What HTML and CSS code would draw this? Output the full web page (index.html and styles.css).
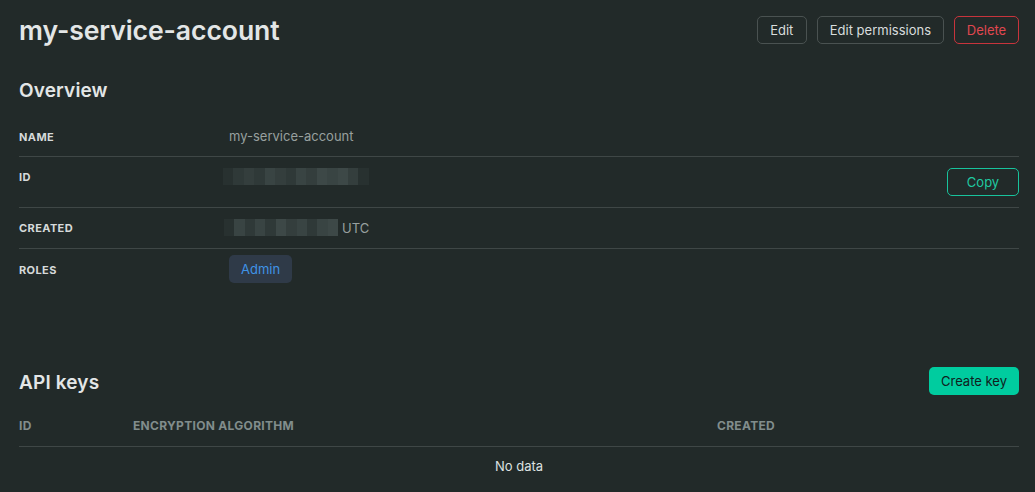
FILE: index.html
```html
<!DOCTYPE html>
<html>
<head>
<meta charset="utf-8">
<link rel="stylesheet" href="styles.css">
</head>
<body>
<div class="page">
  <header class="top">
    <h1 class="title">my-service-account</h1>
    <div class="actions">
      <button class="btn btn-outline btn-edit">Edit</button>
      <button class="btn btn-outline">Edit permissions</button>
      <button class="btn btn-danger">Delete</button>
    </div>
  </header>

  <section class="overview">
    <h2 class="section-title">Overview</h2>
    <div class="rows">
      <div class="row row-name">
        <div class="label">NAME</div>
        <div class="value">my-service-account</div>
      </div>
      <div class="row row-id">
        <div class="label">ID</div>
        <div class="value">
          <span class="mosaic mosaic-id">
            <i class="m1"></i><i class="m2"></i><i class="m3"></i><i class="m2"></i><i class="m4"></i><i class="m3"></i><i class="m2"></i><i class="m4"></i><i class="m3"></i><i class="m5"></i><i class="m4"></i><i class="m5"></i><i class="m3"></i><i class="m1"></i>
          </span>
        </div>
        <button class="btn btn-copy">Copy</button>
      </div>
      <div class="row row-created">
        <div class="label">CREATED</div>
        <div class="value">
          <span class="mosaic mosaic-date">
            <i class="m1"></i><i class="m4"></i><i class="m2"></i><i class="m4"></i><i class="m2"></i><i class="m5"></i><i class="m3"></i><i class="m4"></i><i class="m2"></i><i class="m4"></i><i class="m5"></i>
          </span>
          <span class="utc">UTC</span>
        </div>
      </div>
      <div class="row row-roles">
        <div class="label">ROLES</div>
        <div class="value"><span class="chip">Admin</span></div>
      </div>
    </div>
  </section>

  <section class="keys">
    <div class="keys-head">
      <h2 class="section-title">API keys</h2>
      <button class="btn btn-primary">Create key</button>
    </div>
    <div class="table">
      <div class="thead">
        <div class="th th-id">ID</div>
        <div class="th th-alg">ENCRYPTION ALGORITHM</div>
        <div class="th th-created">CREATED</div>
      </div>
      <div class="empty">No data</div>
    </div>
  </section>
</div>
</body>
</html>
```

FILE: styles.css
```css
* { box-sizing: border-box; }
html, body {
  margin: 0;
  padding: 0;
  background: #222a29;
  font-family: Inter, "Noto Sans", sans-serif;
  color: #dde1e1;
}
.page {
  padding: 0 16px 0 19px;
}
.top {
  display: flex;
  align-items: center;
  justify-content: space-between;
  height: 59px;
  padding-top: 1px;
}
.title {
  margin: 0;
  font-size: 26.6px;
  font-weight: 600;
  letter-spacing: -0.1px;
  color: #e3e6e6;
}
.actions {
  display: flex;
  gap: 10px;
}
.btn {
  font-family: inherit;
  font-size: 13px;
  height: 28px;
  padding: 0 12px;
  border-radius: 5px;
  background: transparent;
  cursor: pointer;
  line-height: 26px;
}
.btn-edit { width: 50px; padding: 0; }
.btn-outline {
  border: 1px solid #4a5251;
  color: #d9dddd;
}
.btn-danger {
  border: 1px solid #c8343c;
  color: #e0474f;
  width: 65px;
  padding: 0;
}
.btn-copy {
  border: 1px solid #18c39c;
  color: #1fc9a1;
  width: 72px;
  margin-top: 0;
}
.btn-primary {
  border: none;
  background: #00cc9f;
  color: #10201c;
  width: 90px;
  padding: 0;
}
.section-title {
  margin: 0;
  font-size: 19px;
  font-weight: 600;
  letter-spacing: 0.15px;
  color: #e3e6e6;
}
.overview .section-title {
  padding-top: 20px;
  height: 56px;
}
.rows {
  display: flex;
  flex-direction: column;
}
.row {
  display: flex;
  align-items: flex-start;
  border-bottom: 1px solid #3f4746;
}
.row:last-child { border-bottom: none; }
.label {
  width: 210px;
  font-size: 11px;
  font-weight: 700;
  color: #d6dada;
  letter-spacing: 0.4px;
}
.value {
  flex: 1;
  font-size: 13px;
  color: #98a09f;
  display: flex;
  align-items: center;
}
.row-name { height: 42px; padding-top: 13px; }
.row-name .label { padding-top: 2px; }
.row-id { height: 51px; padding-top: 11px; }
.row-id .label { padding-top: 2px; }
.row-created { height: 41px; padding-top: 11px; }
.row-created .label { padding-top: 2px; }
.row-roles { height: 40px; padding-top: 6px; }
.row-roles .label { padding-top: 8px; }

.mosaic {
  display: inline-flex;
  height: 17px;
  margin-left: -6px;
}
.mosaic-id { width: 146px; }
.mosaic-date { width: 114px; margin-left: -5px; margin-right: 4px; }
.mosaic i {
  flex: 1;
  height: 100%;
}
.m1 { background: #283130; }
.m2 { background: #2f3938; }
.m3 { background: #343e3d; }
.m4 { background: #394443; }
.m5 { background: #3d4847; }
.utc { color: #98a09f; }

.chip {
  display: inline-block;
  height: 28px;
  line-height: 28px;
  padding: 0 12px;
  border-radius: 5px;
  background: #2f3a48;
  color: #3f93e6;
  font-size: 13px;
}

.keys {
  margin-top: 78px;
}
.keys-head {
  display: flex;
  align-items: center;
  justify-content: space-between;
  height: 28px;
}
.keys-head .section-title {
  padding-top: 2px;
}
.table {
  margin-top: 23px;
}
.thead {
  display: flex;
  height: 29px;
  border-bottom: 1px solid #3f4746;
  font-size: 12px;
  font-weight: 700;
  letter-spacing: 0.3px;
  color: #818d8c;
}
.th-id { width: 114px; }
.th-alg { width: 584px; }
.empty {
  text-align: center;
  font-size: 13px;
  color: #dde1e1;
  padding-top: 11px;
}
```
